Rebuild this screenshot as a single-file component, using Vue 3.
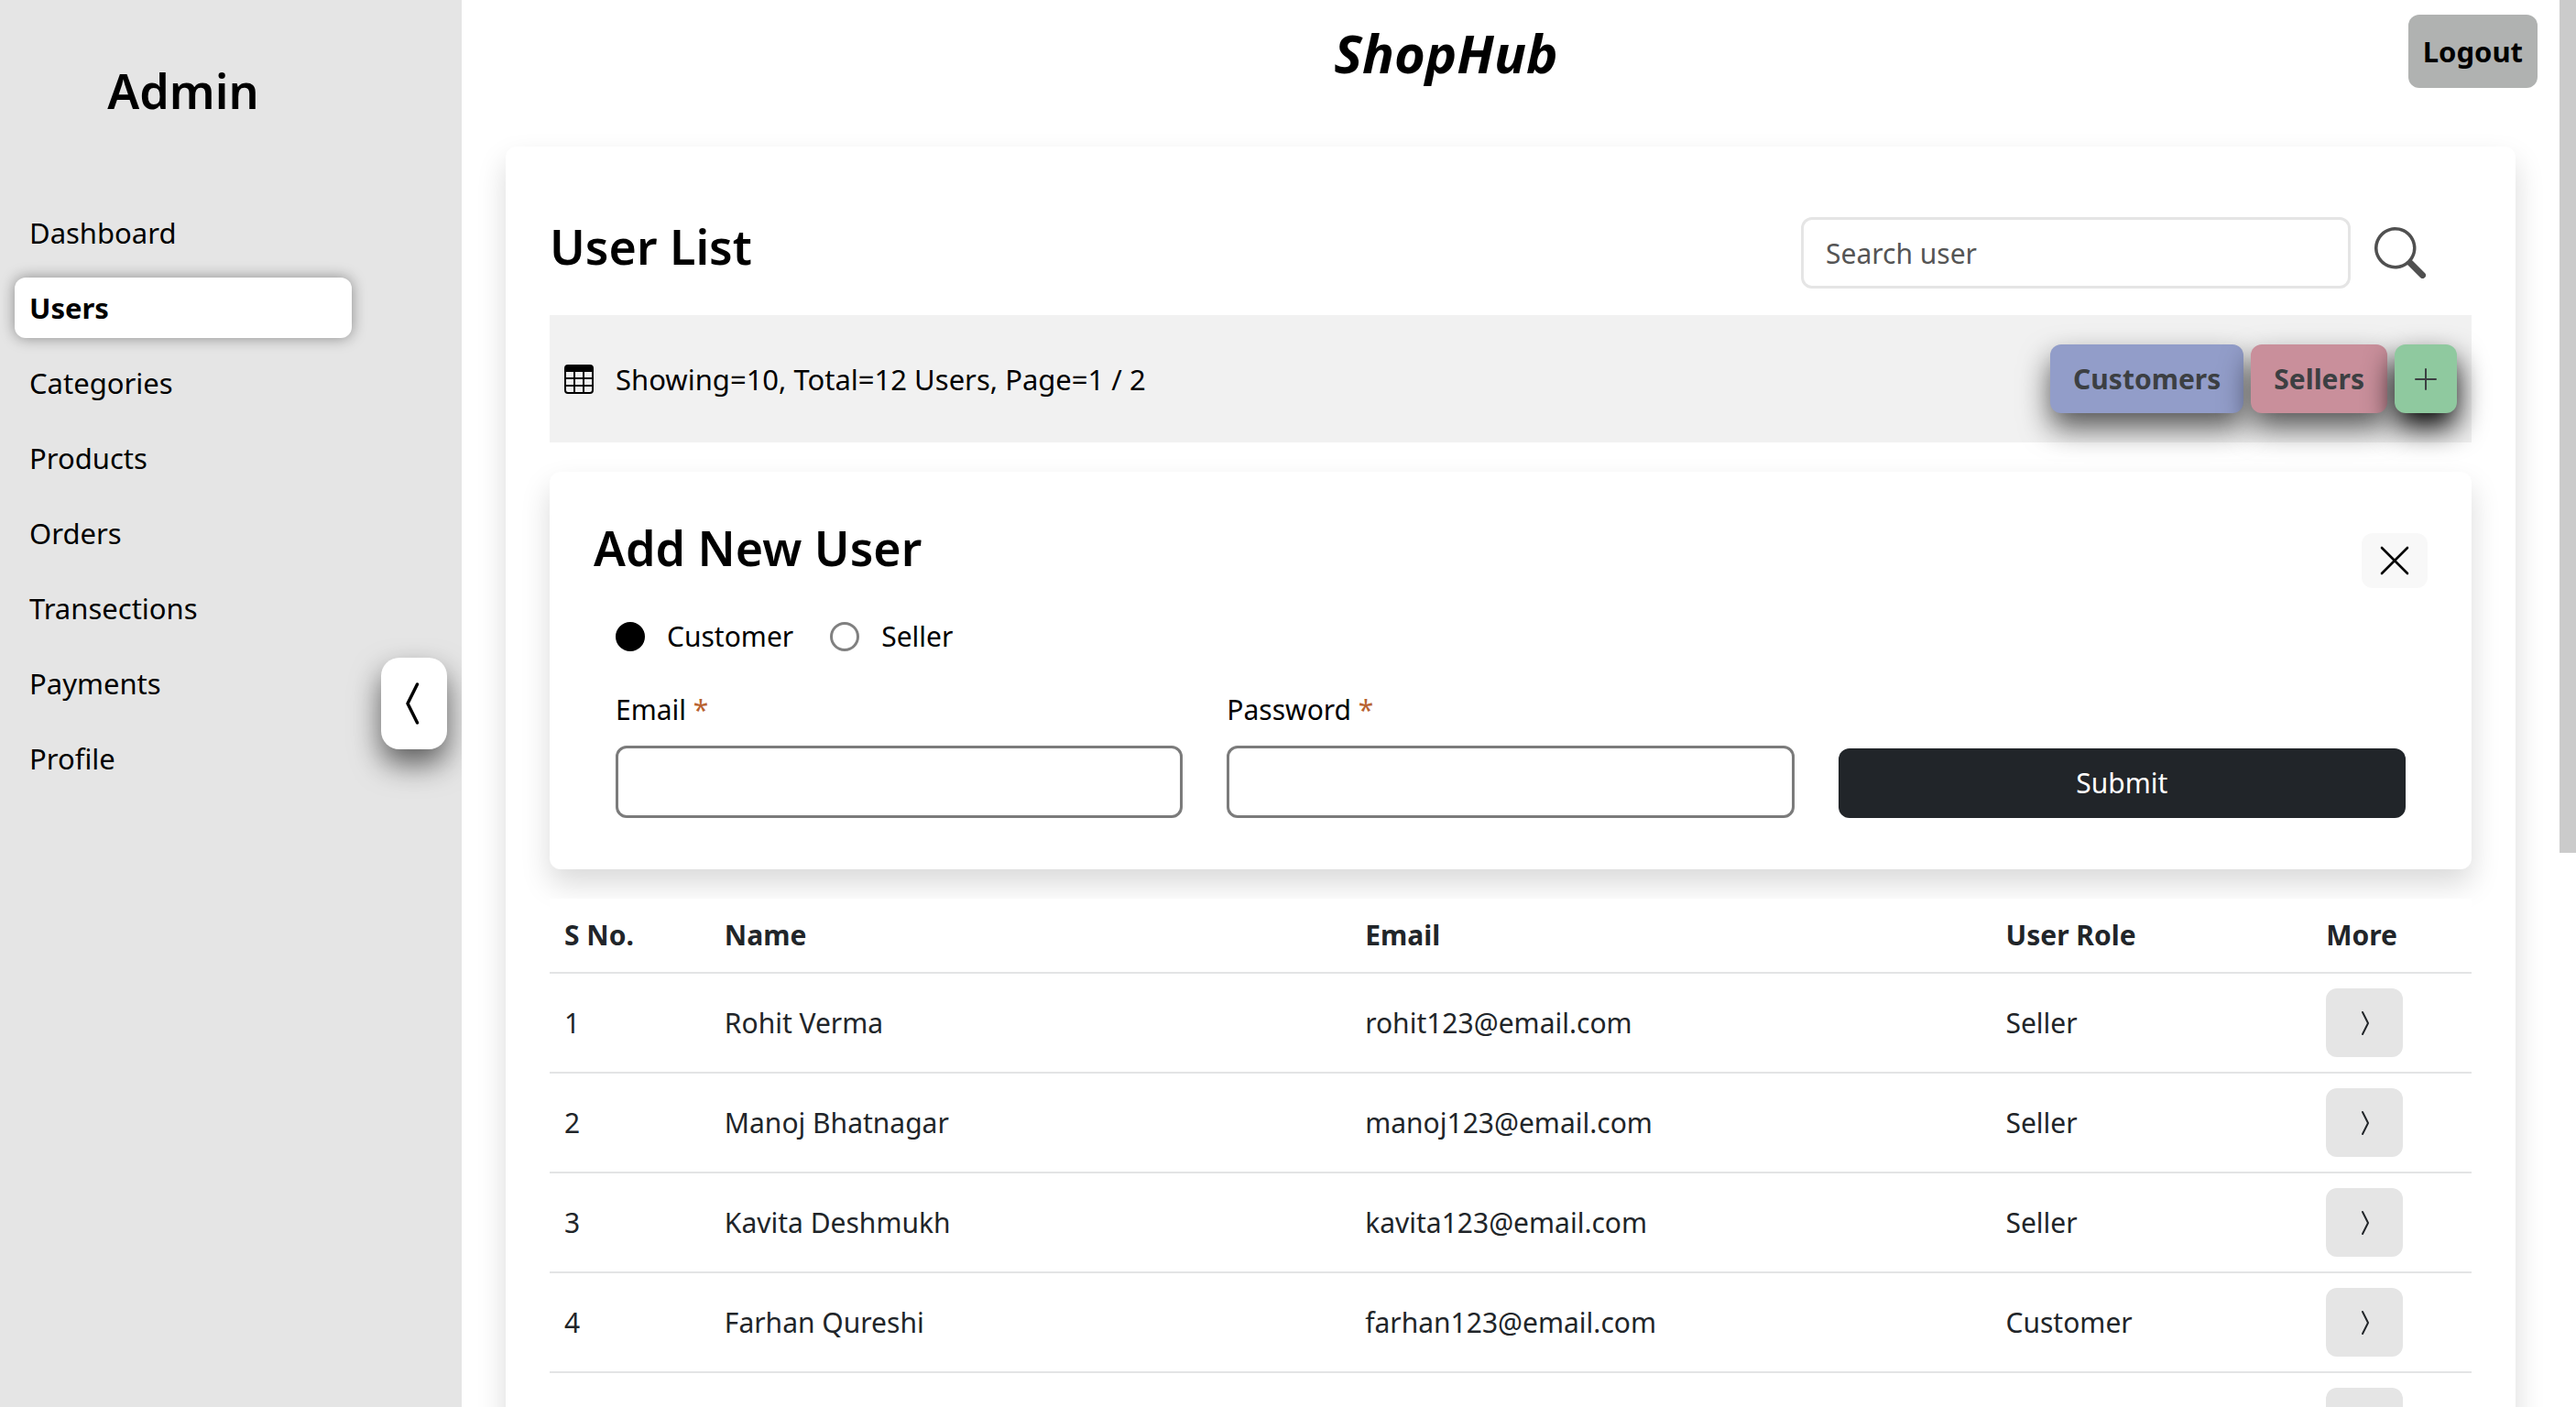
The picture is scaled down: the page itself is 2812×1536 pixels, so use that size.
<script setup>
import { ref } from 'vue'

const navItems = ['Dashboard', 'Users', 'Categories', 'Products', 'Orders', 'Transections', 'Payments', 'Profile']
const active = ref('Users')
const role = ref('Customer')
const search = ref('')
const email = ref('')
const password = ref('')

const users = [
  { no: '1', name: 'Rohit Verma', email: 'rohit123@email.com', role: 'Seller' },
  { no: '2', name: 'Manoj Bhatnagar', email: 'manoj123@email.com', role: 'Seller' },
  { no: '3', name: 'Kavita Deshmukh', email: 'kavita123@email.com', role: 'Seller' },
  { no: '4', name: 'Farhan Qureshi', email: 'farhan123@email.com', role: 'Customer' },
  { no: '', name: '', email: '', role: '' },
]
</script>

<template>
  <div class="app">
    <aside class="sidebar">
      <div class="sidebar-inner">
        <h2 class="heading admin">Admin</h2>
        <nav class="nav">
          <a v-for="item in navItems" :key="item" href="#" class="nav-link" :class="{ active: item === active }" @click.prevent="active = item">{{ item }}</a>
        </nav>
      </div>
      <button class="toggle" type="button" aria-label="Collapse sidebar">
        <svg viewBox="0 0 16 16" width="56" height="56" fill="currentColor" aria-hidden="true"><path d="M9.224 1.553a.5.5 0 0 1 .223.67L6.56 8l2.888 5.776a.5.5 0 1 1-.894.448l-3-6a.5.5 0 0 1 0-.448l3-6a.5.5 0 0 1 .67-.223z" /></svg>
      </button>
    </aside>

    <main class="main">
      <header class="topbar">
        <h1 class="brand">ShopHub</h1>
        <button class="logout" type="button">Logout</button>
      </header>

      <section class="card">
        <div class="title-row">
          <h2 class="heading">User List</h2>
          <form class="search" @submit.prevent>
            <input v-model="search" class="search-input" type="text" placeholder="Search user" aria-label="Search user" />
            <button class="search-btn" type="submit" aria-label="Search">
              <svg viewBox="0 0 16 16" width="56" height="56" fill="currentColor" aria-hidden="true"><path d="M11.742 10.344a6.5 6.5 0 1 0-1.397 1.398h-.001c.03.04.062.078.098.115l3.85 3.85a1 1 0 0 0 1.415-1.414l-3.85-3.85a1.007 1.007 0 0 0-.115-.1zM12 6.5a5.5 5.5 0 1 1-11 0 5.5 5.5 0 0 1 11 0z" /></svg>
            </button>
          </form>
        </div>

        <div class="summary">
          <svg class="table-icon" viewBox="0 0 16 16" width="32" height="32" fill="currentColor" aria-hidden="true"><path d="M0 2a2 2 0 0 1 2-2h12a2 2 0 0 1 2 2v12a2 2 0 0 1-2 2H2a2 2 0 0 1-2-2V2zm15 2h-4v3h4V4zm0 4h-4v3h4V8zm0 4h-4v3h3a1 1 0 0 0 1-1v-2zm-5 3v-3H6v3h4zm-5 0v-3H1v2a1 1 0 0 0 1 1h3zm-4-4h4V8H1v3zm0-4h4V4H1v3zm5-3v3h4V4H6zm4 4H6v3h4V8z" /></svg>
          <span class="summary-text">Showing=10, Total=12 Users, Page=1 / 2</span>
          <div class="filters">
            <button class="filter customers" type="button">Customers</button>
            <button class="filter sellers" type="button">Sellers</button>
            <button class="filter add" type="button" aria-label="Add user">
              <svg viewBox="0 0 16 16" width="32" height="32" fill="currentColor" aria-hidden="true"><path fill-rule="evenodd" d="M8 2a.5.5 0 0 1 .5.5v5h5a.5.5 0 0 1 0 1h-5v5a.5.5 0 0 1-1 0v-5h-5a.5.5 0 0 1 0-1h5v-5A.5.5 0 0 1 8 2Z" /></svg>
            </button>
          </div>
        </div>

        <form class="new-user" @submit.prevent>
          <div class="new-user-head">
            <h2 class="heading">Add New User</h2>
            <button class="close" type="button" aria-label="Close">
              <svg viewBox="0 0 32 32" width="32" height="32" fill="none" stroke="currentColor" stroke-width="2.6" stroke-linecap="round" aria-hidden="true"><path d="M2 2 30 30M30 2 2 30" /></svg>
            </button>
          </div>
          <div class="new-user-body">
            <div class="roles">
              <label v-for="r in ['Customer', 'Seller']" :key="r" class="role">
                <input v-model="role" class="radio" type="radio" name="role" :value="r" />
                {{ r }}
              </label>
            </div>
            <div class="fields">
              <div class="field">
                <label for="email">Email <span class="required">*</span></label>
                <input id="email" v-model="email" class="input" type="email" />
              </div>
              <div class="field">
                <label for="password">Password <span class="required">*</span></label>
                <input id="password" v-model="password" class="input" type="password" />
              </div>
              <button class="submit" type="submit">Submit</button>
            </div>
          </div>
        </form>

        <table class="users">
          <colgroup>
            <col class="c1" /><col class="c4" /><col class="c4" /><col class="c2" /><col class="c1" />
          </colgroup>
          <thead>
            <tr>
              <th scope="col">S No.</th>
              <th scope="col">Name</th>
              <th scope="col">Email</th>
              <th scope="col">User Role</th>
              <th scope="col">More</th>
            </tr>
          </thead>
          <tbody>
            <tr v-for="(u, i) in users" :key="i">
              <td>{{ u.no }}</td>
              <td>{{ u.name }}</td>
              <td>{{ u.email }}</td>
              <td>{{ u.role }}</td>
              <td>
                <button class="more" type="button" aria-label="More">
                  <svg viewBox="0 0 16 16" width="32" height="32" fill="currentColor" aria-hidden="true"><path d="M6.776 1.553a.5.5 0 0 1 .671.223l3 6a.5.5 0 0 1 0 .448l-3 6a.5.5 0 1 1-.894-.448L9.44 8 6.553 2.224a.5.5 0 0 1 .223-.671z" /></svg>
                </button>
              </td>
            </tr>
          </tbody>
        </table>
      </section>
    </main>

    <div class="scrollbar" aria-hidden="true"><div class="thumb"></div></div>
  </div>
</template>

<style>
body {
  margin: 0;
  overflow: hidden;
}
</style>

<style scoped>
* {
  box-sizing: border-box;
}

.app {
  display: flex;
  height: 100vh;
  overflow: hidden;
  background: #fff;
  color: #000;
  font-family: "Segoe UI", "Noto Sans", "Open Sans", sans-serif;
  font-size: 30px;
  line-height: 48px;
}

button,
input {
  font: inherit;
  color: inherit;
  margin: 0;
}

button {
  cursor: pointer;
}

svg {
  display: block;
  flex: none;
}

.heading {
  margin: 0;
  font-size: 52px;
  line-height: 64px;
  font-weight: 600;
}

/* Sidebar */
.sidebar {
  position: relative;
  flex: none;
  width: 504px;
  overflow: hidden;
  background: #e5e5e5;
}

.sidebar-inner {
  width: 400px;
  padding: 67px 16px 0;
}

.admin {
  text-align: center;
}

.nav {
  display: flex;
  flex-direction: column;
  gap: 16px;
  margin-top: 90px;
}

.nav-link {
  padding: 9px 16px;
  border-radius: 12px;
  color: #000;
  font-size: 31px;
  text-decoration: none;
}

.nav-link.active {
  background: #fff;
  font-weight: 700;
  box-shadow: 0 0 16px rgba(0, 0, 0, 0.4);
}

.toggle {
  position: absolute;
  top: 718px;
  right: 16px;
  display: flex;
  align-items: center;
  justify-content: center;
  width: 72px;
  height: 100px;
  padding: 0;
  border: 0;
  border-radius: 20px;
  background: #fff;
  box-shadow: 0 16px 32px rgba(0, 0, 0, 0.6);
}

/* Main column */
.main {
  flex: 1;
  min-width: 0;
}

.topbar {
  display: flex;
  align-items: flex-start;
  height: 112px;
  padding: 16px 24px;
}

.brand {
  flex: 1;
  margin: 0;
  font-size: 58px;
  line-height: 84px;
  font-weight: 700;
  font-style: italic;
  text-align: center;
}

.logout {
  height: 80px;
  padding: 0 16px;
  border: 0;
  border-radius: 12px;
  background: #b0b2b1;
  font-size: 31px;
  font-weight: 700;
}

.card {
  margin: 48px;
  padding: 77px 48px 48px;
  border-radius: 12px;
  box-shadow: 0 16px 32px rgba(0, 0, 0, 0.15);
}

.title-row {
  display: flex;
  align-items: flex-start;
  justify-content: space-between;
}

.search {
  display: flex;
  padding-right: 24px;
}

.search-input {
  width: 600px;
  height: 78px;
  padding: 0 24px;
  border: 3px solid #e5e5e5;
  border-radius: 12px;
  background: #fff;
  outline: none;
}

.search-input::placeholder {
  color: #555;
  opacity: 1;
}

.search-btn {
  padding: 11px 26px;
  border: 0;
  background: none;
  color: #505050;
}

.summary {
  display: flex;
  align-items: center;
  margin-top: 29px;
  padding: 32px 16px;
  background: #f1f1f1;
}

.summary-text {
  margin-left: 24px;
  font-size: 31px;
}

.filters {
  display: flex;
  gap: 8px;
  margin-left: auto;
}

.filter {
  height: 75px;
  padding: 0 25px;
  border: 0;
  border-radius: 12px;
  color: #3c3f42;
  font-weight: 700;
  box-shadow: 0 16px 32px rgba(0, 0, 0, 0.65);
}

.customers {
  background: #929dc9;
}

.sellers {
  background: #c98f9b;
}

.add {
  padding: 0 18px;
  background: #8fc99f;
  box-shadow: 0 16px 32px #000;
}

/* New user form */
.new-user {
  position: relative;
  margin-top: 32px;
  padding: 51px 48px 56px;
  border-radius: 12px;
  background: #fff;
  box-shadow: 0 16px 32px rgba(0, 0, 0, 0.15);
}

.new-user-head {
  display: flex;
  align-items: flex-start;
  justify-content: space-between;
  height: 64px;
}

.close {
  margin-top: 16px;
  padding: 14px 20px;
  border: 0;
  border-radius: 12px;
  background: #f8f8f8;
}

.new-user-body {
  padding: 0 24px;
}

.roles {
  display: flex;
  gap: 40px;
  margin-top: 41px;
}

.role {
  display: flex;
  align-items: center;
  gap: 24px;
}

.radio {
  appearance: none;
  width: 32px;
  height: 32px;
  border: 3px solid #808080;
  border-radius: 50%;
  background: #fff;
}

.radio:checked {
  border-color: #000;
  background: #000;
}

.fields {
  display: grid;
  grid-template-columns: repeat(3, 1fr);
  gap: 48px;
  align-items: end;
  margin-top: 32px;
}

.field {
  display: flex;
  flex-direction: column;
  gap: 15px;
}

.required {
  color: #b8622f;
}

.input {
  width: 100%;
  height: 79px;
  padding: 0 24px;
  border: 3px solid #7b7b7b;
  border-radius: 12px;
  background: #fff;
}

.submit {
  height: 76px;
  border: 0;
  border-radius: 12px;
  background: #212529;
  color: #fff;
}

/* Users table */
.users {
  position: relative;
  width: 100%;
  margin-top: 32px;
  border-collapse: separate;
  border-spacing: 0;
  table-layout: fixed;
  background: #fff;
  color: #212529;
}

.c1 {
  width: 8.3333%;
}

.c2 {
  width: 16.6667%;
}

.c4 {
  width: 33.3333%;
}

.users th,
.users td {
  padding: 16px;
  border-bottom: 2px solid #e3e4e5;
  text-align: left;
  vertical-align: middle;
}

.users th {
  font-weight: 700;
}

.more {
  display: flex;
  align-items: center;
  height: 75px;
  padding: 0 26px;
  border: 0;
  border-radius: 12px;
  background: #e5e5e5;
}

/* Scroll position */
.scrollbar {
  flex: none;
  width: 18px;
  background: #fff;
}

.thumb {
  height: 931px;
  background: #cbcbcb;
}
</style>
